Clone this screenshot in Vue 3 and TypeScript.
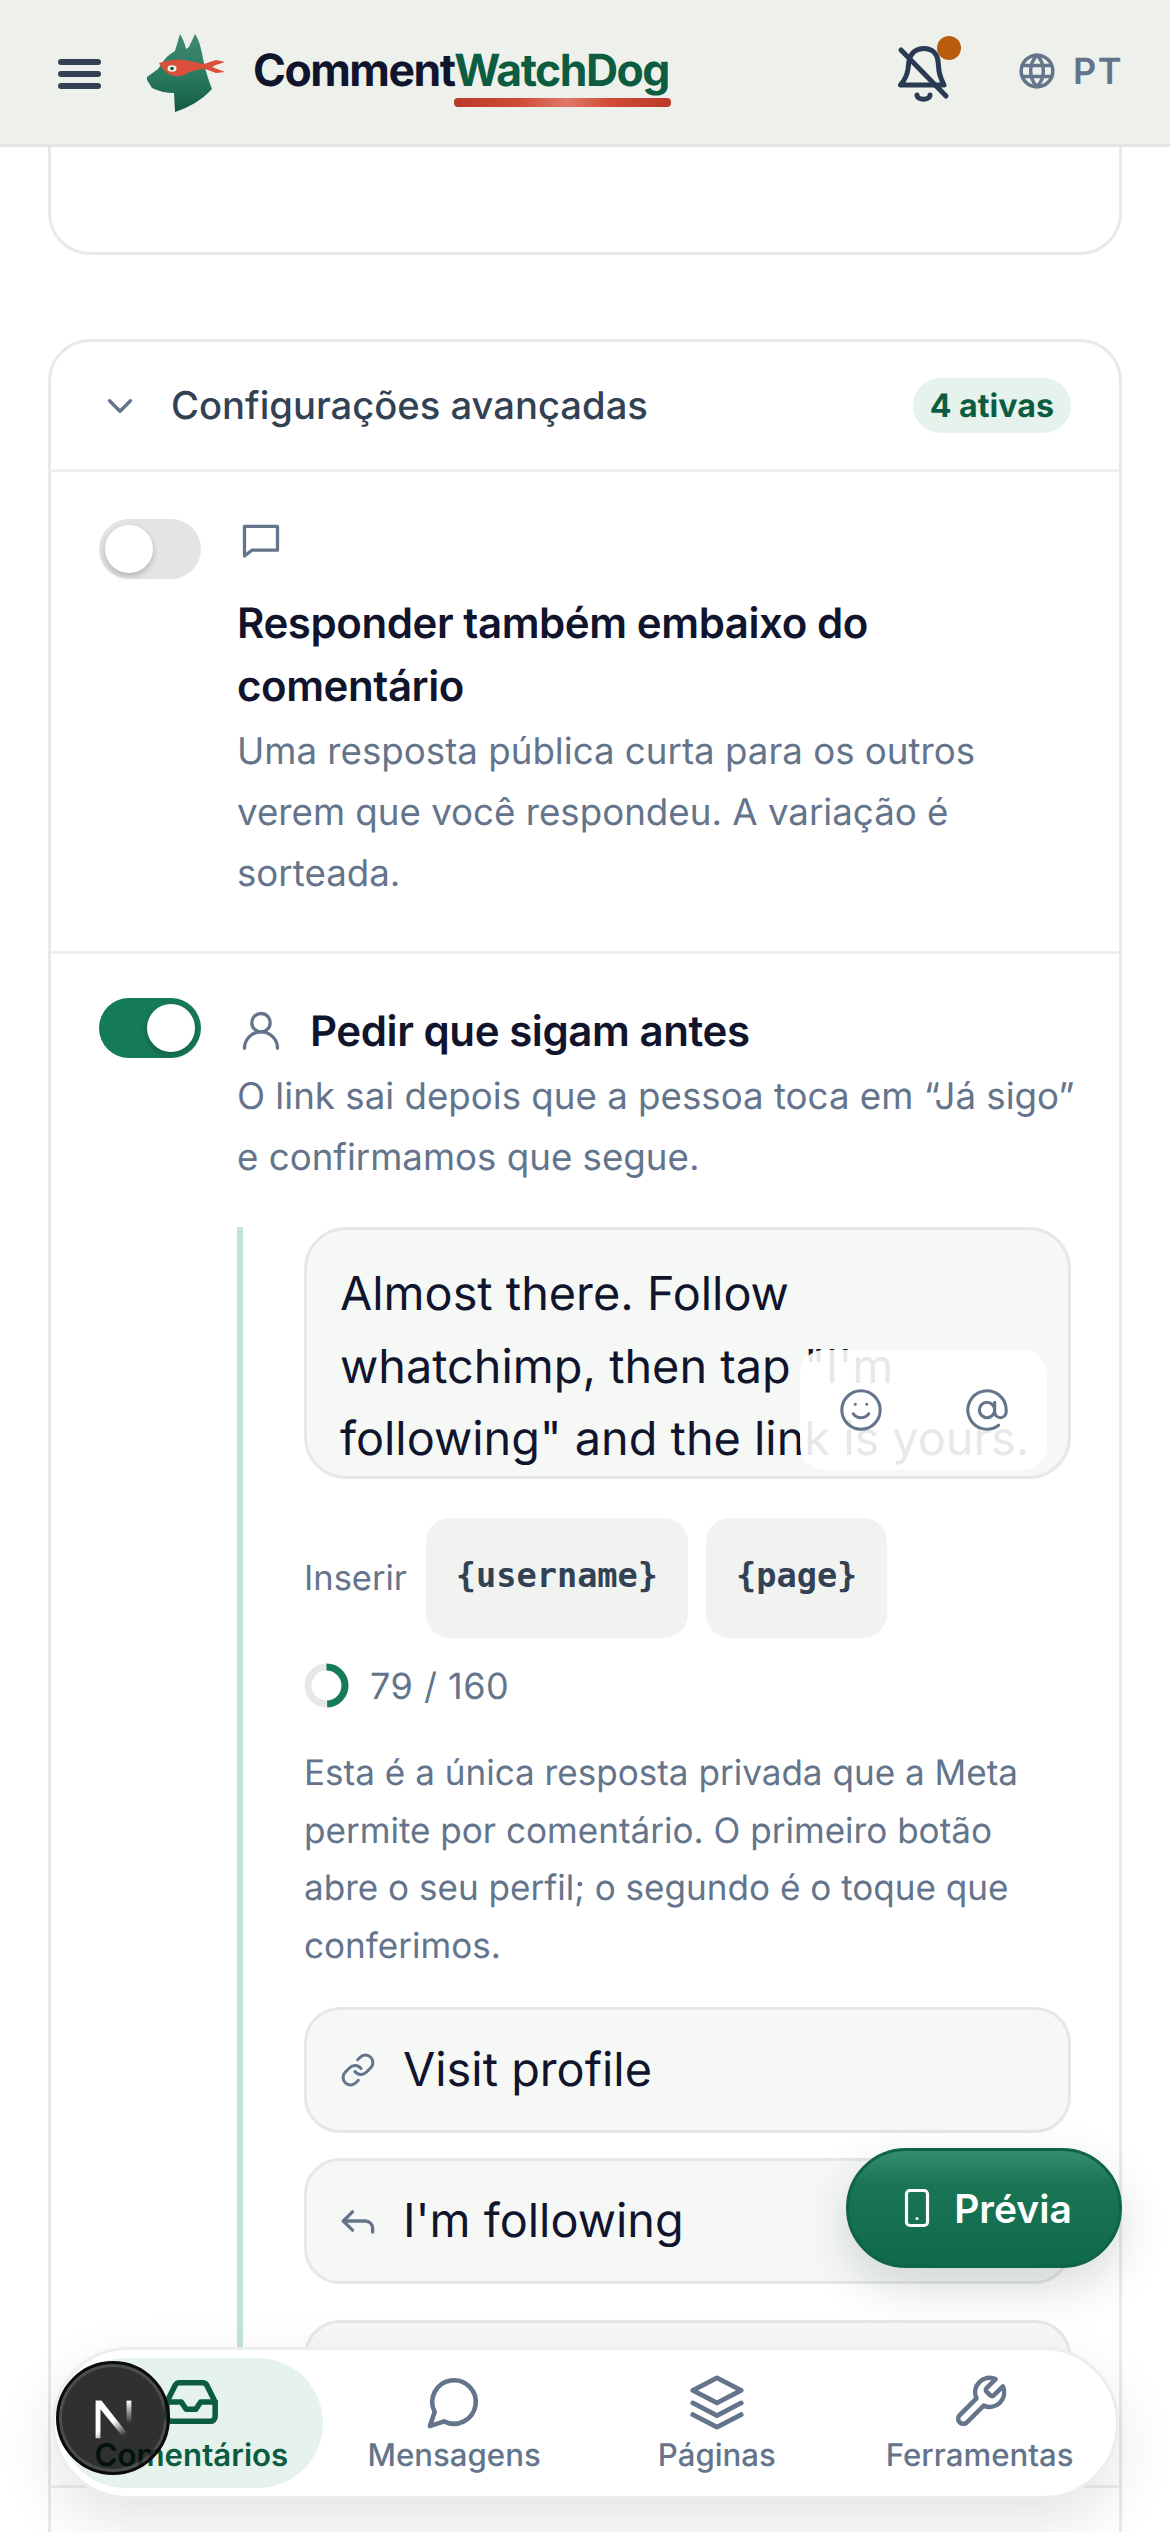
<script setup lang="ts">
const navItems = [
  { label: 'Mensagens', icon: 'msg' },
  { label: 'Páginas', icon: 'layers' },
  { label: 'Ferramentas', icon: 'wrench' },
]
</script>

<template>
  <div class="page">
    <header class="topbar">
      <div class="burger"><i></i><i></i><i></i></div>
      <svg class="logo" viewBox="0 0 90 85" aria-hidden="true">
        <defs>
          <linearGradient id="dogfill" x1="0" y1="0" x2="0" y2="1">
            <stop offset="0" stop-color="#3f8a70" />
            <stop offset="0.55" stop-color="#2a7a5f" />
            <stop offset="1" stop-color="#0f5a41" />
          </linearGradient>
        </defs>
        <path d="M7 46 L18 38 L20 35 C24 28 29 23 35 20 L40 3 C43 8 45 13 46 18 L49 16 L55 3 C60 10 62 22 64 32 C66 42 69 50 72 58 C62 69 48 77 35 81 L34 62 C26 62 18 60 12 57 L7 49 Z" fill="url(#dogfill)" />
        <path d="M19 32 C26 30 38 27 49 30 L64 33 L76 29 L85 31 L76 34 L72 36 L85 41 L76 42 L64 37.5 L49 41 C44 46 28 50 19 32 Z" fill="#d94f3a" />
        <ellipse cx="32" cy="37.5" rx="4.5" ry="3.2" fill="#e8f2ec" />
        <circle cx="32" cy="37.5" r="1.8" fill="#14513c" />
      </svg>
      <div class="brand">
        <span class="brand-a">Comment</span><span class="brand-b">WatchDog</span>
      </div>
      <div class="bell">
        <svg viewBox="0 0 60 60" class="ic bell-ic">
          <path d="M4.5 40 C8 36 11 31 12 24 L13 16 C14.5 8 20 3.5 28 3.5 C36 3.5 41 8 42 16 L43 26 C44 32 46 36 48 40 Z" />
          <path d="M5 5 L50 51" />
          <path d="M21 50 C21 55.5 34 55.5 34 50" />
        </svg>
        <span class="dot"></span>
      </div>
      <div class="lang">
        <svg viewBox="0 0 24 24" class="ic globe"><circle cx="12" cy="12" r="10" /><path d="M12 2a14.5 14.5 0 0 0 0 20 14.5 14.5 0 0 0 0-20" /><path d="M3.2 8.5h17.6M3.2 15.5h17.6" /></svg>
        <span>PT</span>
      </div>
    </header>

    <main class="content">
      <section class="card stub"></section>

      <section class="card adv">
        <div class="adv-head">
          <svg viewBox="0 0 24 24" class="ic chev"><path d="m6 9 6 6 6-6" /></svg>
          <span class="adv-title">Configurações avançadas</span>
          <span class="badge">4 ativas</span>
        </div>

        <div class="opt opt-first">
          <div class="toggle"><span class="knob"></span></div>
          <div class="opt-body">
            <svg viewBox="0 0 24 24" class="ic opt-ic"><path d="M21 4H3v16.2l4-3.2h14z" /></svg>
            <h3 class="opt-title">Responder também embaixo do comentário</h3>
            <p class="opt-desc">Uma resposta pública curta para os outros verem que você respondeu. A variação é sorteada.</p>
          </div>
        </div>

        <div class="opt opt-second">
          <div class="toggle on"><span class="knob"></span></div>
          <div class="opt-body">
            <div class="opt-line">
              <svg viewBox="0 0 24 24" class="ic opt-ic"><circle cx="12" cy="8" r="5" /><path d="M3 22a9 9 0 0 1 18 0" /></svg>
              <h3 class="opt-title">Pedir que sigam antes</h3>
            </div>
            <p class="opt-desc">O link sai depois que a pessoa toca em “Já sigo” e confirmamos que segue.</p>

            <div class="follow">
              <div class="ta">
                <div class="ta-text">Almost there. Follow whatchimp, then tap "I'm following" and the link is yours.</div>
                <div class="ta-tools">
                  <svg viewBox="0 0 24 24" class="ic tool"><circle cx="12" cy="12" r="10" /><path d="M8 14s1.5 2 4 2 4-2 4-2" /><path d="M9 9h.01M15 9h.01" /></svg>
                  <svg viewBox="0 0 24 24" class="ic tool"><circle cx="12" cy="12" r="4" /><path d="M16 8v5a3 3 0 0 0 6 0v-1a10 10 0 1 0-3.92 7.94" /></svg>
                </div>
                <span class="grip"></span>
              </div>

              <div class="insert">
                <span class="insert-label">Inserir</span>
                <button class="chip">{username}</button>
                <button class="chip">{page}</button>
              </div>

              <div class="count">
                <svg viewBox="0 0 45 45" class="ring">
                  <circle cx="22.5" cy="22.5" r="18.5" class="ring-bg" />
                  <circle cx="22.5" cy="22.5" r="18.5" class="ring-fg" pathLength="160" stroke-dasharray="79 160" transform="rotate(-90 22.5 22.5)" />
                </svg>
                <span>79 / 160</span>
              </div>

              <p class="help">Esta é a única resposta privada que a Meta permite por comentário. O primeiro botão abre o seu perfil; o segundo é o toque que conferimos.</p>

              <div class="btn-field first">
                <svg viewBox="0 0 24 24" class="ic fld-ic"><path d="M10 13a5 5 0 0 0 7.54.54l3-3a5 5 0 0 0-7.07-7.07l-1.72 1.71" /><path d="M14 11a5 5 0 0 0-7.54-.54l-3 3a5 5 0 0 0 7.07 7.07l1.71-1.71" /></svg>
                <span>Visit profile</span>
              </div>
              <div class="btn-field">
                <svg viewBox="0 0 24 24" class="ic fld-ic reply"><path d="M9 17 4 12l5-5" /><path d="M20 18v-2a4 4 0 0 0-4-4H4" /></svg>
                <span>I'm following</span>
              </div>
              <div class="btn-field third"></div>
            </div>
          </div>
        </div>
      </section>
    </main>

    <button class="fab">
      <svg viewBox="0 0 24 24" class="ic fab-ic"><rect x="6" y="2" width="12" height="20" rx="2" /><path d="M12 18h.01" /></svg>
      <span>Prévia</span>
    </button>

    <nav class="nav">
      <a class="nav-item active">
        <svg viewBox="0 0 24 24" class="ic nav-ic"><path d="M22 12h-6l-2 3h-4l-2-3H2" /><path d="M5.45 5.11 2 12v6a2 2 0 0 0 2 2h16a2 2 0 0 0 2-2v-6l-3.45-6.89A2 2 0 0 0 16.76 4H7.24a2 2 0 0 0-1.79 1.11z" /></svg>
        <span>Comentários</span>
      </a>
      <a v-for="item in navItems" :key="item.label" class="nav-item">
        <svg v-if="item.icon === 'msg'" viewBox="0 0 24 24" class="ic nav-ic">
          <path d="M7.9 20A9 9 0 1 0 4 16.1L2 22Z" />
        </svg>
        <svg v-else-if="item.icon === 'layers'" viewBox="0 0 60 60" class="ic nav-ic thick">
          <path d="M30 5 55 18 30 31 5 18z" /><path d="M5 31 30 44 55 31" /><path d="M5 43 30 56 55 43" />
        </svg>
        <svg v-else viewBox="0 0 24 24" class="ic nav-ic">
          <path d="M14.7 6.3a1 1 0 0 0 0 1.4l1.6 1.6a1 1 0 0 0 1.4 0l3.77-3.77a6 6 0 0 1-7.94 7.94l-6.91 6.91a2.12 2.12 0 0 1-3-3l6.91-6.91a6 6 0 0 1 7.94-7.94l-3.76 3.76z" />
        </svg>
        <span>{{ item.label }}</span>
      </a>
    </nav>

    <div class="devbadge">
      <svg viewBox="0 0 60 60" class="dev-n">
        <defs>
          <linearGradient id="nfade" x1="0" y1="0" x2="0.6" y2="1">
            <stop offset="0.6" stop-color="#fff" />
            <stop offset="1" stop-color="#fff" stop-opacity="0" />
          </linearGradient>
          <linearGradient id="nfade2" x1="0" y1="0" x2="0" y2="1">
            <stop offset="0" stop-color="#fff" />
            <stop offset="0.9" stop-color="#fff" stop-opacity="0" />
          </linearGradient>
        </defs>
        <path d="M12 12h6L48 50l-4 4L17 21v30h-5z" fill="url(#nfade)" />
        <rect x="44" y="12" width="5" height="26" fill="url(#nfade2)" />
      </svg>
    </div>
  </div>
</template>

<style>
html, body { margin: 0; background: #fff; }
</style>

<style scoped>
* { box-sizing: border-box; }
.page {
  position: relative;
  width: 1170px;
  height: 2532px;
  overflow: hidden;
  background: #fff;
  font-family: Inter, "Noto Sans", sans-serif;
  color: #10152d;
  text-rendering: geometricPrecision;
}
.ic { fill: none; stroke: currentColor; stroke-width: 2; stroke-linecap: round; stroke-linejoin: round; display: block; flex: none; }

.topbar {
  position: relative;
  z-index: 5;
  height: 147px;
  background: #edf0eb;
  border-bottom: 3px solid #e3e5e2;
  display: flex;
  align-items: center;
  padding: 0 47px 0 58px;
}
.burger { width: 43px; height: 30px; display: flex; flex-direction: column; justify-content: space-between; margin-top: 4px; }
.burger i { display: block; height: 6px; border-radius: 3px; background: #334155; }
.logo { width: 90px; height: 85px; margin-left: 39px; margin-top: 2px; flex: none; }
.brand {
  position: relative;
  margin-left: 23px;
  font-size: 44.5px;
  font-weight: 700;
  letter-spacing: -1.5px;
  line-height: 56px;
  margin-top: -4px;
  white-space: nowrap;
}
.brand-a { color: #10152d; }
.brand-b { color: #0b5c40; position: relative; }
.brand-b::after {
  content: "";
  position: absolute;
  left: 0;
  right: -2px;
  top: 55px;
  height: 9px;
  border-radius: 4px;
  background: linear-gradient(90deg, #b93a2a, #d14a35 30%, #e07a6c 52%, #d14a35 72%, #b93a2a);
}
.bell { position: relative; margin-left: auto; width: 60px; height: 60px; color: #2a3a52; margin-top: 6px; margin-right: 62px; }
.bell-ic { width: 60px; height: 60px; stroke-width: 5; }
.dot { position: absolute; right: -5px; top: -9px; width: 24px; height: 24px; border-radius: 50%; background: #b95c0b; }
.lang { display: flex; align-items: center; gap: 17px; color: #64748b; font-size: 36px; font-weight: 600; letter-spacing: 1.5px; margin-top: -2px; }
.globe { width: 38px; height: 38px; stroke-width: 2.2; }

.content { padding: 0 48px; display: flex; flex-direction: column; gap: 84px; }
.card { background: #fff; border: 3px solid #e8eae7; border-radius: 42px; }
.stub { height: 168px; margin-top: -60px; }
.adv { height: 2300px; }

.adv-head {
  height: 130px;
  display: flex;
  align-items: center;
  padding: 0 48px 0 48px;
  border-bottom: 3px solid #eef0ee;
}
.chev { width: 42px; height: 42px; color: #64748b; }
.adv-title { margin-left: 30px; font-size: 38.2px; font-weight: 500; color: #334155; }
.badge {
  margin-left: auto;
  height: 55px;
  padding: 0 17px;
  border-radius: 28px;
  background: #e6f3ed;
  color: #0b5c40;
  font-size: 32.2px;
  font-weight: 700;
  display: flex;
  align-items: center;
}

.opt { display: flex; align-items: flex-start; padding: 0 42px 0 48px; }
.opt-first { padding-top: 47px; padding-bottom: 47px; border-bottom: 3px solid #eef0ee; }
.opt-second { padding-top: 44px; height: 1534px; overflow: hidden; border-bottom: 3px solid #eef0ee; }
.toggle {
  flex: none;
  width: 102px;
  height: 60px;
  border-radius: 30px;
  background: #e3e5e2;
  padding: 6px;
  margin-right: 36px;
}
.knob { display: block; width: 48px; height: 48px; border-radius: 50%; background: #fff; box-shadow: 0 3px 6px rgba(0,0,0,.22); }
.toggle.on { background: #157a57; }
.toggle.on .knob { margin-left: 42px; }
.opt-body { flex: 1; min-width: 0; }
.opt-ic { width: 44px; height: 44px; color: #64748b; margin-left: 2px; stroke-width: 1.8; }
.opt-first .opt-ic { margin-bottom: 29px; }
.opt-line { display: flex; align-items: center; gap: 27px; height: 63px; margin-top: 2px; }
.opt-line .opt-ic { margin-top: -2px; }
.opt-title { margin: 0; font-size: 42px; letter-spacing: -.42px; font-weight: 600; line-height: 63px; color: #10152d; }
.opt-desc { margin: 2px 0 0; font-size: 36.7px; line-height: 61.2px; color: #64748b; }

.follow { margin-top: 40px; margin-right: 6px; border-left: 6px solid #c4e3d8; padding-left: 61px; }
.ta {
  position: relative;
  height: 252px;
  background: #f6f8f6;
  border: 3px solid #e6e8e5;
  border-radius: 42px;
  overflow: hidden;
  padding: 28px 33px;
}
.ta-text { font-size: 46.8px; line-height: 72.6px; color: #10152d; }
.ta-tools {
  position: absolute;
  left: 493px;
  top: 120px;
  width: 247px;
  height: 120px;
  border-radius: 24px;
  background: rgba(255,255,255,.9);
  display: flex;
  align-items: center;
  color: #64748b;
}
.tool { width: 46px; height: 46px; stroke-width: 1.6; }
.tool:first-child { margin-left: 38px; }
.tool:nth-child(2) { margin-left: 80px; }
.grip { position: absolute; right: 0; bottom: 2px; width: 4px; height: 4px; background: #444; transform: rotate(45deg); }
.insert { display: flex; align-items: center; margin-top: 39px; }
.insert-label { font-size: 34.5px; color: #64748b; margin-right: 19px; }
.chip {
  height: 120px;
  border: 0;
  border-radius: 24px;
  background: #f0f3ef;
  padding: 0 30px 6px;
  margin-right: 18px;
  color: #334155;
  font-family: "DejaVu Sans Mono", monospace;
  font-weight: 700;
  font-size: 33.6px;
}
.count { display: flex; align-items: center; gap: 21px; margin-top: 25px; color: #64748b; font-size: 36px; letter-spacing: .5px; }
.ring { width: 45px; height: 45px; flex: none; }
.ring circle { fill: none; stroke-width: 7; }
.ring-bg { stroke: #e6e8e5; }
.ring-fg { stroke: #157a57; }
.help { margin: 37px 0 0; font-size: 35.1px; line-height: 57.6px; color: #64748b; }
.btn-field {
  height: 126px;
  margin-top: 25px;
  background: #f6f8f6;
  border: 3px solid #e6e8e5;
  border-radius: 36px;
  display: flex;
  align-items: center;
  padding-left: 33px;
  font-size: 46.8px;
  color: #10152d;
}
.btn-field.first { margin-top: 32px; }
.btn-field.third { margin-top: 36px; }
.fld-ic { width: 36px; height: 36px; color: #64748b; margin-right: 27px; stroke-width: 2; }
.fld-ic.reply { width: 44px; height: 44px; margin-left: -4px; margin-right: 23px; stroke-width: 1.8; }

.fab {
  position: absolute;
  left: 846px;
  top: 2148px;
  width: 276px;
  height: 120px;
  border-radius: 60px;
  border: 3px solid #0f6347;
  background: linear-gradient(180deg, #348c6c, #1a7555 30%, #0f6a4c);
  color: #fff;
  font-family: Inter, sans-serif;
  font-size: 39px;
  font-weight: 600;
  display: flex;
  align-items: center;
  justify-content: center;
  gap: 16px;
  box-shadow: 0 18px 48px rgba(15, 40, 30, .16);
  z-index: 6;
}
.fab-ic { width: 42px; height: 42px; stroke-width: 1.8; }

.nav {
  position: absolute;
  left: 52px;
  top: 2347px;
  width: 1067px;
  height: 152px;
  border-radius: 76px;
  background: rgba(255,255,255,.97);
  border: 3px solid #eceeeb;
  box-shadow: 0 24px 60px rgba(15, 30, 25, .12);
  display: grid;
  grid-template-columns: repeat(4, 1fr);
  padding: 8px 5px;
  z-index: 7;
}
.nav-item {
  display: flex;
  flex-direction: column;
  align-items: center;
  justify-content: center;
  gap: 5px;
  color: #64748b;
  font-size: 31.2px;
  font-weight: 500;
}
.nav-item.active { background: #e6f3ed; border-radius: 66px; color: #0b5c40; font-weight: 600; }
.nav-ic { width: 58px; height: 58px; stroke-width: 1.9; }
.nav-item.active .nav-ic { stroke-width: 2.3; }
.nav-ic.thick { stroke-width: 5; }

.devbadge {
  position: absolute;
  left: 56px;
  top: 2361px;
  width: 114px;
  height: 114px;
  border-radius: 50%;
  background: rgba(0,0,0,.8);
  border: 3px solid #0b0b0b;
  box-shadow: inset 0 0 0 3px rgba(255,255,255,.14);
  display: flex;
  align-items: center;
  justify-content: center;
  z-index: 8;
}
.dev-n { width: 58px; height: 58px; }
</style>
